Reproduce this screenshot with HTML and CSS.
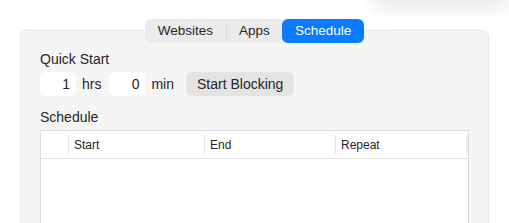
FILE: index.html
```html
<!DOCTYPE html>
<html>
<head>
<meta charset="utf-8">
<link rel="stylesheet" href="styles.css">
</head>
<body>
<div class="glow"></div>
<div class="window">
  <div class="tabs">
    <div class="tab">Websites</div>
    <div class="sep"></div>
    <div class="tab">Apps</div>
    <div class="tab active">Schedule</div>
  </div>
  <div class="panel">
    <div class="label">Quick Start</div>
    <div class="quick">
      <div class="field">1</div>
      <span class="unit unit-hrs">hrs</span>
      <div class="field">0</div>
      <span class="unit unit-min">min</span>
      <div class="button">Start Blocking</div>
    </div>
    <div class="label label-schedule">Schedule</div>
    <div class="table">
      <div class="thead">
        <div class="th th-check"></div>
        <div class="th th-start">Start</div>
        <div class="th th-end">End</div>
        <div class="th th-repeat">Repeat</div>
        <div class="th th-tail"></div>
      </div>
      <div class="tbody"></div>
    </div>
  </div>
</div>
</body>
</html>
```
FILE: styles.css
```css
* { box-sizing: border-box; }
html, body { margin: 0; padding: 0; background: #ffffff; overflow: hidden; }
body {
  font-family: "Liberation Sans", Arial, sans-serif;
  color: #262626;
  width: 509px;
  height: 223px;
  position: relative;
}
.glow {
  position: absolute;
  left: 370px;
  top: -14px;
  width: 140px;
  height: 24px;
  border-radius: 12px;
  background: #ececec;
  filter: blur(8px);
}
.window {
  padding-top: 19px;
  display: flex;
  flex-direction: column;
  align-items: center;
  height: 223px;
  overflow: hidden;
}
.tabs {
  position: relative;
  z-index: 2;
  display: flex;
  align-items: center;
  height: 24px;
  background: #ebebeb;
  border-radius: 6px;
  font-size: 13.5px;
}
.tab {
  height: 24px;
  line-height: 24px;
  padding: 0 12.5px;
  color: #262626;
  border-radius: 6px;
}
.tab.active {
  background: #0b7bff;
  color: #ffffff;
}
.sep {
  width: 1px;
  height: 13px;
  background: #d6d6d6;
}
.panel {
  margin-top: -13px;
  align-self: stretch;
  margin-left: 20px;
  margin-right: 20px;
  flex: 1 0 auto;
  background: #f5f5f5;
  border: 1px solid #e8e8e8;
  border-bottom: none;
  border-radius: 6px 6px 0 0;
  padding: 19px 19px 0;
  display: flex;
  flex-direction: column;
}
.label {
  font-size: 14px;
  line-height: 18px;
  height: 18px;
}
.quick {
  margin-top: 4px;
  display: flex;
  align-items: center;
  font-size: 14px;
}
.field {
  width: 36px;
  height: 24px;
  line-height: 24px;
  background: #ffffff;
  border-radius: 5px;
  text-align: right;
  padding-right: 6px;
}
.unit-hrs { margin-left: 6px; margin-right: 8px; }
.unit-min { margin-left: 6px; margin-right: 12px; }
.button {
  height: 24px;
  line-height: 24px;
  padding: 0 11px;
  background: #e3e3e3;
  border-radius: 6px;
}
.label-schedule { margin-top: 12px; }
.table {
  margin-top: 4px;
  width: 429px;
  flex: 1 0 auto;
  background: #ffffff;
  border: 1px solid #dcdcdc;
  border-bottom: none;
}
.thead {
  display: flex;
  height: 28px;
  border-bottom: 1px solid #e3e3e3;
  font-size: 12px;
}
.th {
  position: relative;
  flex: none;
  height: 27px;
  line-height: 27px;
  padding-top: 1px;
  padding-left: 6px;
}
.th::before {
  content: "";
  position: absolute;
  left: 0;
  top: 4px;
  width: 1px;
  height: 19px;
  background: #e6e6e6;
}
.th-check { width: 27px; }
.th-check::before { display: none; }
.th-start { width: 136px; }
.th-end { width: 131px; }
.th-repeat { width: 131px; }
.th-tail { flex: 1 1 auto; padding: 0; }
.th-tail::before { width: 2px; background: #ececec; }
```
